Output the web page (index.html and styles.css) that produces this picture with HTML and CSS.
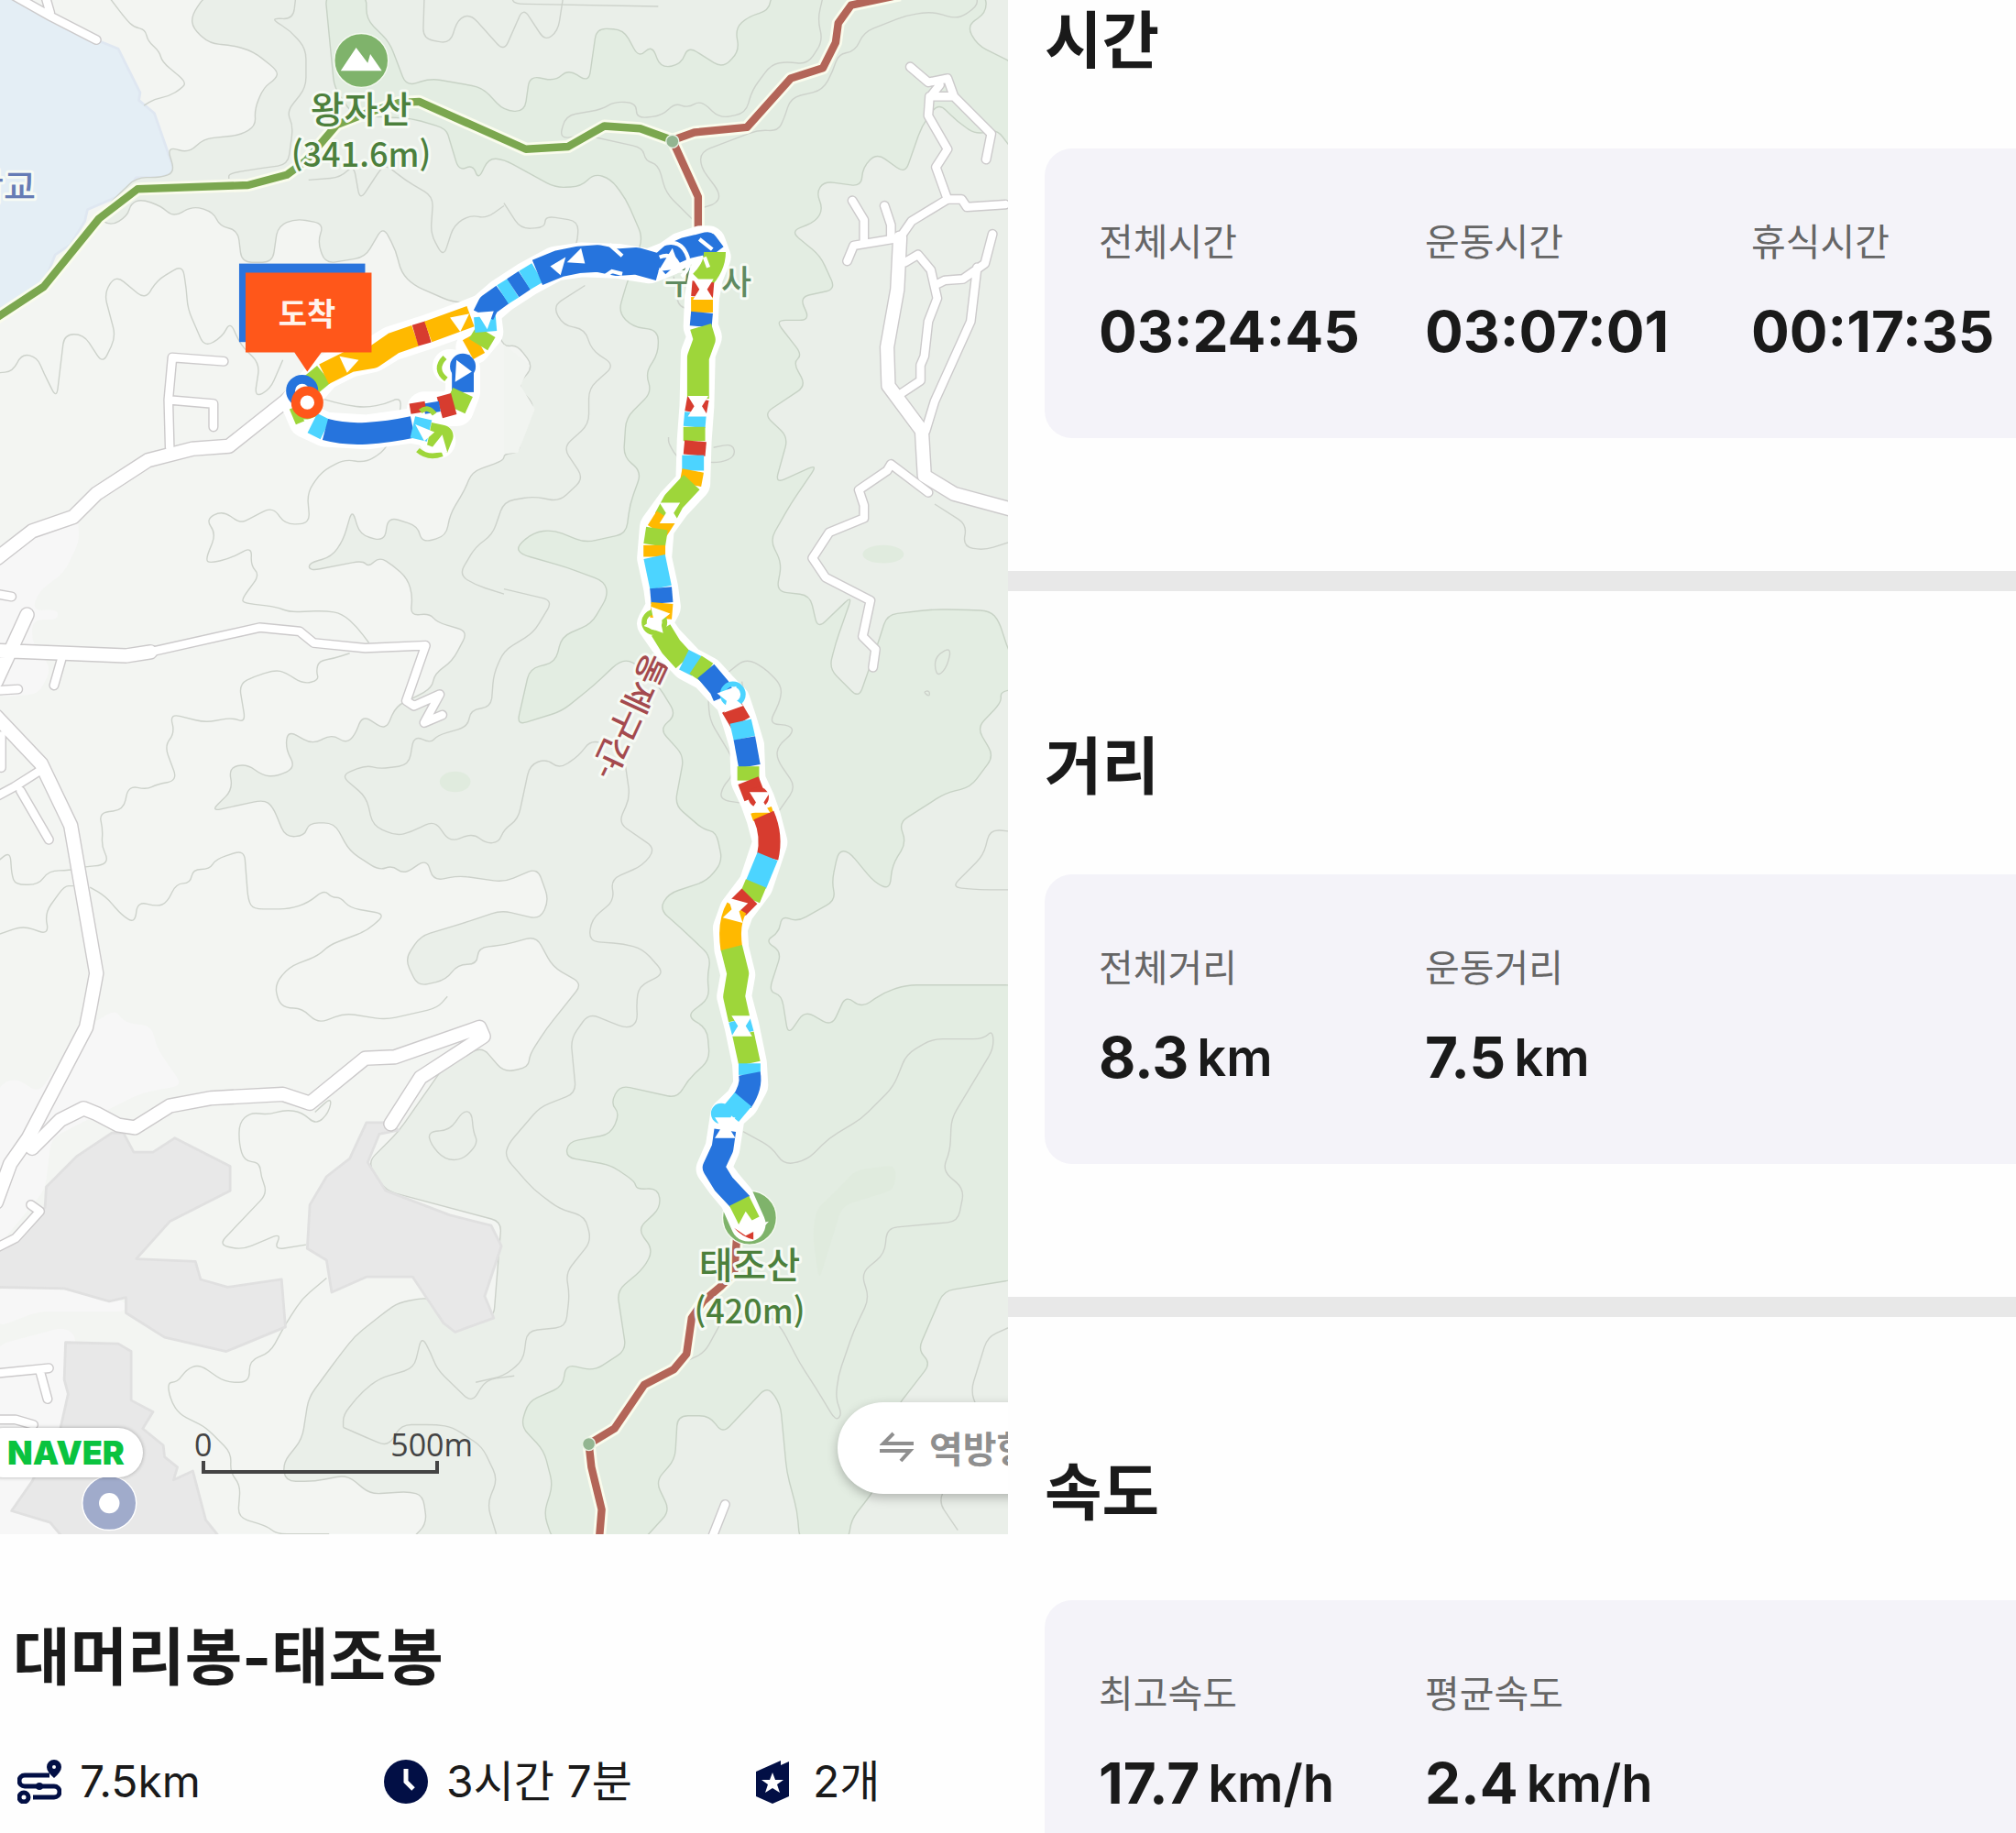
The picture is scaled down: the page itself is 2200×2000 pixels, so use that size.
FILE: index.html
```html
<!DOCTYPE html>
<html lang="ko">
<head>
    <meta charset="UTF-8">
    <meta name="viewport" content="width=device-width, initial-scale=1.0">
    <title>대머리봉-태조봉</title>
    <link rel="stylesheet" href="styles.css">
</head>
<body>
    <main class="page">
        <section class="course">
            <div class="map">
                <svg class="map-canvas" viewBox="0 0 1100 1674">
                    <defs>
                        <g id="roads-wide">
                            <path d="M-2 434L25 413L57 402L75 384L115 358L150 349L178 347L222 312L235 300" />
                            <path d="M-2 506L50 508L98 510L117 507M21 478L10 502L-3 530" />
                            <path d="M-3 557L32 594L55 642L75 757L70 784L67 799L22 885L8 905L-3 935" />
                            <path d="M25 893L47 871L65 862L75 866L92 875L105 877L132 860L164 854L220 851L241 858L284 823L307 822L373 799L376 806L327 838L304 874" />
                            <path d="M700 185L698 225L690 270L691 300L717 335L719 370L742 384L790 397" />
                        </g>
                        <g id="roads-narrow">
                            <path d="M8 -5L40 13L75 31M35 -4L39 10" />
                            <path d="M132 348L131 311L134 278L174 281M131 311L166 314L166 332" />
                            <path d="M117 507L202 488L233 491L244 500L284 504L331 502L316 545L322 549L342 540L330 562L344 556" />
                            <path d="M48 512L42 533M-2 462L9 464M-2 537L14 536M30 600L11 612L-2 619M16 615L38 653M1 572V597" />
                            <path d="M24 937L31 942L12 963L-2 970M-2 1068L38 1064M31 1066L37 1088M-2 1104L12 1104L26 1108M564 1170L553 1198" />
                            <path d="M708 52L722 64L737 61L742 75L771 104L767 124M742 75H723M731 66L723 76L722 90L737 116L728 130L737 155L709 172L700 185" />
                            <path d="M737 155H748L752 161L782 159M663 156L672 171V187M688 160L693 175V185M700 185L664 191L659 203" />
                            <path d="M704 204L714 198L724 210L729 232L722 250L719 277L716 284V296L701 306" />
                            <path d="M729 221L735 218L749 217L766 205L772 182M760 208L755 250L727 312L720 335" />
                            <path d="M722 383L693 361L690 366L668 381L672 393V403L645 414L632 434L642 449L677 467L671 495L681 505L679 519" />
                        </g>
                        <polyline id="trail-green" points="-4,248 34,223 77,170 107,147 193,144 223,136 238,125 262,97 285,88 310,80 326,79 409,116 442,114 470,98 498,100 523,109" />
                        <g id="trail-red">
                            <polyline points="700,-4 662,4 652,18 650,33 640,53 615,61 581,99 540,103 523,109 543,153 543,180" />
                            <polyline points="573,964 571,990 560,1001 547,1012 538,1025 534,1053 524,1065 501,1077 478,1111 458,1123 460,1141 468,1174 466,1198" />
                        </g>
                        <g id="route-line">
                            <path d="M238 306L232 313L238 327L253 334L285 336L320 331L334 334L341 343" />
                            <path d="M238 306L252 290L272 280L290 276L305 267L333 258L358 249L376 242L390 230L410 217L432 205L452 202L480 203L505 207L520 201L530 194L545 189L551 189L555 200L549 215L546 231L545 254L548 262L543 275L542 316L540 343L539 376L524 392L511 410L509 434L514 457L516 472L509 485L518 498L535 516L550 524L560 535L570 545L575 560L581 580L582 607L589 622L594 636L599 655L588 688L573 708L568 722L569 738L574 758L571 775L577 798L583 827L584 844L577 857L566 867L564 880L562 893L555 909L563 920L573 932L582 952" />
                            <path d="M376 242L378 258L368 270M350 285L360 287V305L355 318L330 318" />
                        </g>
                        <path id="bowtie" d="M-8 -8L8 -8L3 0L8 8L-8 8L-3 0Z" />
                    </defs>

                    <g class="terrain" transform="scale(1.403)">
                        <rect class="lowland" width="784" height="1193" />
                        <path class="urban" d="M-2 430L60 400L62 420L50 445L30 460L25 475L45 474V482H25L25 500L40 520L30 540L-2 542ZM-2 845L12 838L30 850L65 800L90 785L96 795L118 798L122 815L142 844L110 850L80 865L60 875L40 885L35 925L-2 970ZM-2 1001L50 1003L98 1012V1020L30 1020L-2 1032ZM-2 1046L50 1032L60 1040L50 1073L53 1084L47 1111L25 1152L9 1175L39 1184L60 1198H-2Z" />
                        <path class="water" d="M-4 -4L15 -2L40 14L75 31L92 38L109 72L108 78L120 88L136 134L125 138L106 138L98 150L68 163L66 172L55 190L43 198L35 218L20 230L-4 242Z" />

                        <path class="midland" d="M790 -4V1200H320L320 1197L332 1185L329 1163L318 1160L288 1162L270 1147L245 1152L222 1152L220 1138L235 1119L240 1087L262 1057L276 1039L300 1020L310 1013L332 1009L384 1025L390 950L300 926L286 904L310 880L345 830L375 814L392 834L411 830L412 820L425 800L453 765L430 752L417 728L392 735L372 737L371 750L356 750L347 762L325 767L315 746L327 728L360 718L390 708L420 715L427 700L418 675L392 686L357 681L337 685L332 668L314 680L305 673L295 677L272 662L260 640L240 640L237 650L222 651L212 627L205 622L164 631L181 614L178 597L192 594L204 603L215 604L230 597L222 582L224 568L243 579L258 571L269 578L276 572L282 556L300 568L308 549L323 542L336 535L338 524L352 514L364 491L340 484L334 477L319 479L321 464L317 450L306 440L295 433L287 441L282 436L241 444L240 438L258 433L267 420L274 396L280 416L299 421L302 402L325 409L328 422L347 417L350 400L362 380L367 367L392 358V353L404 352L405 340L411 328L416 315L402 300L415 285L402 268L392 270L378 235L352 235L322 222L312 212L308 195L298 176L284 200L253 205L247 188L252 174L230 170L216 176L212 204L188 204L185 179L171 176L166 165L150 160L135 169L125 160L110 155L102 158L99 168L86 176L75 168L106 138L125 138L136 134L130 114L147 119L158 108L187 105L199 98L198 85L205 68L215 61L216 55L197 40L180 35L163 34L150 22L149 12L160 -4Z" />
                        <path class="highland" d="M253 -4L260 68L275 90L320 92L347 100L350 110L357 133L368 128L372 140L380 123L392 124L432 146L452 145L462 135L475 139L487 155L500 185L487 222L481 243L492 254L512 257L512 275L502 290L507 305L487 325L485 355L499 367L490 392L487 415L455 422L430 412L415 414L402 425L405 431L440 441L470 452L473 463L460 485L437 495L432 515L412 520L402 564L437 553L462 533L482 514L492 514L512 533L526 556L513 567L532 588L525 626L547 645L557 647L562 670L550 685L520 695L513 707L532 724L553 744L550 760L552 776L534 790L550 800L552 824L535 840L527 854L482 844L475 858L482 866L475 882L442 888L440 900L475 906L494 919L495 925L512 924L514 939L496 956L508 972L501 986L480 1004L487 1050L462 1066L440 1061L438 1078L411 1090L405 1109L423 1128L430 1155L423 1177L430 1198H500L521 1175L510 1152L525 1135L527 1101L552 1101L562 1115L597 1078L607 1092L612 1145L620 1175L622 1198H660L662 1182L677 1163L698 1130L697 1095L724 1060L714 1050L734 1004L790 995V766L705 766L687 772L670 784L658 774L647 798L626 786L613 805L608 774L598 771L608 740L595 732L606 725L608 712L620 717L650 700L647 686L652 662L660 662L680 686L692 692L694 673L705 655L699 640L735 617L755 612L773 588L760 566L779 546L778 538L790 536V515L784 505L777 483L770 475L745 474L725 474L690 478L682 503L668 543L645 520L650 500L663 463L636 489L630 463L604 460L608 438L599 420L615 392L636 361L603 376L613 340L594 322L627 300L617 282L624 276L603 249L630 249L622 231L650 225L638 199L615 180L635 172L640 162L635 150L641 141L670 145L671 130L682 119L704 135L717 98L730 80L745 95L760 105L775 100L790 120V50L760 35L752 20L767 10V-4H600L598 8L582 13L572 22L575 40L562 53L535 36L530 50L514 53L507 35L497 45L485 23L464 22L458 64L442 54L432 63L412 59L408 87L392 86L375 68L335 61L316 67L303 33L285 15V-4Z" />
                        <ellipse class="highland-patch" cx="687" cy="431" rx="16" ry="7" />
                        <ellipse class="highland-patch" cx="354" cy="608" rx="12" ry="8" />
                        <path class="highland-patch" d="M632 960L635 940L652 925L665 910L697 906L696 925L655 938L637 996Z" />
                        <path class="peak-patch" d="M392 268L412 284L405 300L416 318L403 352L392 353Z" />

                        <g class="contours">
                            <path d="M85 -2L98 15L104 21L113 23L115 32L124 40L126 48L145 64L141 69L131 75L120 77L112 82" />
                            <path d="M230 -2L228 15L210 14L226 24L238 38L238 68L223 87L228 98L224 128L195 132L178 135V139" />
                            <path d="M330 -2L329 30L350 34L356 15L366 11L392 40L407 6L424 32L434 24L438 -2" />
                            <path d="M-2 290L10 289L17 275L29 278L34 290L44 310L50 260L65 260L80 283L90 262L81 228L90 214L113 233L122 218L142 206L145 225L146 240L159 270L173 262L179 250L187 268L202 283L198 309L210 303L220 280" />
                            <path d="M240 140L265 138L275 128L280 156L295 133L300 128L315 140L337 153L335 182L345 200L353 175L366 167L378 170L392 160" />
                            <path d="M250 310L268 315L285 317L300 314L311 309L312 318L300 350L284 360L268 357L250 367L239 383L241 407L222 408L212 394L195 403L187 407L173 397L160 404L168 415L160 435L163 438L180 434L196 425L195 440L202 447L188 466L190 469L215 472L225 476L253 475L266 477L278 488L287 500" />
                            <path d="M272 508L260 512L248 514L246 522L248 529L236 532L222 523L214 521L198 526L186 532L191 562L180 558L160 562L132 555L136 570L128 580L138 607L122 610L114 614L100 611L96 630L77 632L80 645L79 658L84 668L80 673L66 674L54 677L38 677L30 688L12 688L9 680L8 662L-2 670" />
                            <path d="M-2 727L18 720L38 727L35 710L50 689L57 689M70 690L82 697L95 712L105 718L107 701L122 705L130 702L137 687L148 687L150 676L163 676L168 668L190 661L193 700L197 707L225 707L240 702L252 692L258 698L265 698L272 706L300 711L285 724L256 735L248 743L225 752L214 765L216 778L222 784L235 784L247 796L268 788L300 793L340 784L348 775" />
                            <path d="M760 -2V5L745 15L725 9L705 12L672 25L665 40L652 42L648 55L640 70L615 76L610 92L605 102L590 101L545 118V130L560 150L558 158L545 162" />
                            <path d="M398 -2L400 3L512 5M640 -2L636 15L640 32L628 50L612 48L600 50L585 70L580 88L560 92L545 78L535 84L525 80L515 90L495 92V80L478 79L468 85L440 90L435 108L455 105L500 115L502 125L512 128L518 150L540 172" />
                            <path d="M392 158L405 178L424 177L424 168L450 172L449 190L442 200M455 222L430 238L438 253L455 256L460 272L478 284L458 302V330L438 348L454 372L435 390L415 386L392 390L383 416L370 425L357 447L370 455L392 462" />
                            <path d="M520 340V345L528 358L560 360L572 355L570 345L555 348M524 215L528 240L550 240" />
                            <path d="M728 510L740 503L737 518L730 526L727 520ZM718 538L723 537V542Z" />
                            <path d="M727 392L752 408L749 425L765 428L790 420" />
                            <path d="M552 520L560 528L580 512L594 519L608 533L607 545L598 563L615 564L617 570L605 580L604 590L619 612L605 632M577 530L580 545L550 530L552 560L570 590V603L562 612L560 622L580 625" />
                            <path d="M392 458L430 467L415 492L392 506L384 524L382 550L366 552L364 565L340 572L335 578L322 572L318 595L295 598L285 595L265 603L285 620L290 642L308 650L320 647L338 638L350 655L368 648L378 656L388 655L392 645L403 637L412 595L425 590L435 598L450 588L460 575L485 585L490 620L481 640L510 660L500 673L475 684L478 700L460 715L458 732L485 734L500 738L517 757L497 767L495 780L496 795L488 800L475 795L458 788L444 808L448 850L420 861L395 890L393 900L415 925L435 940L455 946L460 965L440 990L443 1006L440 1032L410 1035L407 1058L392 1070L370 1075" />
                            <path d="M578 880L600 892L610 906L628 902L645 885L670 870L695 845L705 820L725 808L765 808L772 801L773 815L740 870L739 895L733 910L750 925L745 950L690 955L688 975L670 990L676 1010L664 1035L652 1070L650 1088L655 1100L650 1105L635 1080L622 1060L608 1033L600 1025M560 1030L548 1052L535 1058" />
                            <path d="M790 692H762L740 690L765 665L770 645L790 647M790 1030L768 1040L755 1082L762 1100L730 1168L745 1190" />
                            <path d="M245 865L258 853L256 865L246 875L235 865L222 863L208 867L195 865L186 873V890L190 903L202 904L203 915L208 928L170 968L188 972L205 965L219 959L213 972L238 968M254 994L235 1010L222 1030L210 1052L194 1058V1075H175L155 1061L145 1065L138 1075H130L133 1090L140 1100L150 1105L160 1110L180 1130L179 1145L187 1155L185 1180L208 1187L215 1193L256 1193" />
                            <path d="M350 879L360 864L367 865L368 880L372 889L360 902H346L335 890L333 880ZM267 1110V1100L282 1082L295 1072L322 1064L328 1039L335 1052L340 1065L367 1091L378 1073L400 1070M267 1110L285 1118L302 1125L312 1108H340L352 1110L375 1125L387 1150L379 1170L386 1193" />
                        </g>

                        <path class="built" d="M87 881H96L104 896L119 896L136 885L179 907V926L132 950L106 979L152 981L156 995L177 1001L219 995L222 1032L176 1051L128 1040L98 1021V1009L85 1012L50 1002L-4 1001V975L15 961L35 939L36 923L60 899Z" />
                        <path class="built" d="M51 1044L92 1045L102 1051V1089L119 1098L111 1111L127 1124L128 1133L138 1141L135 1151L150 1144L160 1182L172 1197H50L39 1184L9 1175L25 1152L47 1111L53 1084L50 1073Z" />
                        <path class="built" d="M285 873H300L310 879L295 882L286 904L300 926L350 945L382 953L390 969L377 1008L384 1025L354 1036L345 1029L321 993L285 993L258 1005L254 980L239 971L241 937L254 915L272 901Z" />

                        <use href="#roads-narrow" class="road-edge narrow-edge" />
                        <use href="#roads-wide" class="road-edge wide-edge" />
                        <use href="#roads-narrow" class="road narrow" />
                        <use href="#roads-wide" class="road wide" />

                        <use href="#trail-green" class="trail-edge" />
                        <use href="#trail-red" class="trail-edge" />
                        <use href="#trail-green" class="trail green" />
                        <use href="#trail-red" class="trail red" />
                        <circle class="junction" cx="523" cy="110" r="5" />
                        <circle class="junction" cx="458" cy="1123" r="5" />
                        <circle class="peak" cx="281" cy="47" r="21" />
                        <path class="peak-icon" d="M265 55L277 37L286 49L288 42L297 55Z" />
                        <circle class="peak" cx="583" cy="947" r="21" />
                        <circle class="place" cx="85" cy="1169" r="21" />
                        <circle class="hole" cx="85" cy="1169" r="8" />
                    </g>

                    <g class="map-text">
                        <text class="school" x="39" y="217" text-anchor="end">학교</text>
                        <text class="temple" x="725" y="321">구</text>
                        <text class="temple" x="787" y="321">사</text>
                        <text class="closed" text-anchor="middle" transform="translate(675 776) rotate(115)">통제구간-</text>
                    </g>

                    <g transform="scale(1.403)">
                        <use href="#route-line" class="route-edge" />
                        <g class="route">
                            <path class="lime" d="M233 315L238 327" />
                            <path class="sky" d="M243 329L253 334" />
                            <path class="blue" d="M253 334Q268 338 285 337T321 332" />
                            <path class="sky" d="M321 332L334 335" />
                            <path class="lime" d="M334 337L344 339L340 349" />
                            <path class="lime" d="M241 300L252 291" />
                            <path class="amber" d="M252 291L272 281L290 278L306 267L323 261" />
                            <path class="red" d="M323 261L333 258" />
                            <path class="amber" d="M333 258L366 246" />
                            <path class="amber" d="M364 272L373 267" />
                            <path class="lime" d="M372 268L378 258" />
                            <path class="sky" d="M378 258L377 246" />
                            <path class="blue" d="M376 245L380 237L391 229" />
                            <path class="sky" d="M391 229L399 224" />
                            <path class="blue" d="M399 224L408 218" />
                            <path class="sky" d="M408 218L418 212" />
                            <path class="blue track-wide" d="M418 212L435 205L450 202L465 201L480 204L495 203L513 208" />
                            <path class="blue" d="M512 207L522 198L533 193L542 191L550 189L556 197" />
                            <path class="lime" d="M556 196Q556 208 545 219" />
                            <path class="red" d="M547 219L546 231" />
                            <path class="amber" d="M546 231V243" />
                            <path class="blue" d="M546 243L545 254" />
                            <path class="lime" d="M545 254L548 264L543 278V310" />
                            <path class="red" d="M543 310L541 321" />
                            <path class="sky" d="M541 321L540 332" />
                            <path class="lime" d="M540 332L540 343" />
                            <path class="red" d="M541 343L540 354" />
                            <path class="sky" d="M539 354V366" />
                            <path class="amber" d="M539 366L537 377" />
                            <path class="lime" d="M538 375L524 390L517 403" />
                            <path class="amber" d="M518 402L511 413" />
                            <path class="lime" d="M511 411L509 424" />
                            <path class="amber" d="M509 424V433" />
                            <path class="sky" d="M509 433L514 457" />
                            <path class="blue" d="M514 457L515 469" />
                            <path class="amber" d="M515 469L514 481" />
                            <path class="lime" d="M514 490L522 503L532 514" />
                            <path class="sky" d="M532 513L542 518" />
                            <path class="lime" d="M541 517L550 523" />
                            <path class="blue" d="M549 522L560 535L563 542" />
                            <path class="red" d="M569 550L576 562" />
                            <path class="sky" d="M576 561L579 574" />
                            <path class="blue" d="M579 574L583 596" />
                            <path class="lime" d="M582 596V607" />
                            <path class="red" d="M582 607L587 620" />
                            <path class="amber" d="M592 630L594 636" />
                            <path class="red" d="M594 634Q601 650 597 667" />
                            <path class="sky" d="M597 666L588 688" />
                            <path class="lime" d="M588 687L583 699" />
                            <path class="red" d="M583 697L574 706" />
                            <path class="amber" d="M573 706Q566 718 569 738" />
                            <path class="lime" d="M569 737L574 757L571 775L575 793" />
                            <path class="sky" d="M575 793L578 804" />
                            <path class="lime" d="M578 804L583 827" />
                            <path class="sky" d="M583 827V836" />
                            <path class="blue" d="M583 835Q585 845 577 857" />
                            <path class="sky" d="M578 855L568 867" />
                            <path class="blue" d="M564 879L562 893L555 908L563 921L577 936" />
                            <path class="lime" d="M575 934L583 950" />
                            <path class="blue" d="M360 284V305" />
                            <path class="lime" d="M360 305L354 318" />
                            <path class="red" d="M353 314L342 317" />
                            <path class="blue thin" d="M342 316L330 318" />
                            <path class="red thin" d="M331 316L319 318" />
                        </g>
                        <circle class="fill-blue" cx="360" cy="285" r="10" />
                        <circle class="fill-sky" cx="561" cy="866" r="8" />
                        <circle class="ring sky" cx="570" cy="540" r="8" />
                        <circle class="ring lime" cx="509" cy="484" r="8" />
                        <circle class="fill-red" cx="590" cy="620" r="8" />
                        <path class="ring lime" d="M347 295Q337 287 346 278M327 320Q333 315 338 322M325 350Q333 357 344 353" />
                        <path class="seam" d="M515 190Q530 185 535 200Q537 210 530 215M513 200Q523 196 528 206M544 186L554 194M548 200L551 208M474 190L484 199M470 215L476 211L484 213" />
                        <path class="arrow" d="M264 277L279 280L270 290ZM350 247L365 244L358 258ZM371 243L384 242L379 256ZM355 280L367 289L354 297ZM428 207L440 200L436 214ZM441 204L452 193L455 205ZM512 211L523 193L529 209ZM323 330L338 336L330 343ZM333 352L344 338L348 352ZM236 326L243 326L240 333Z" />
                        <path class="arrow" d="M572 957L580 942L587 952L598 950L587 962Z" />
                        <path class="fill-red" d="M571 955Q577 962 586 964V958L580 961Z" />
                        <g class="arrow">
                            <use href="#bowtie" transform="translate(547 225)" />
                            <use href="#bowtie" transform="translate(543 316)" />
                            <use href="#bowtie" transform="translate(521 399)" />
                            <use href="#bowtie" transform="translate(511 482) rotate(20)" />
                            <use href="#bowtie" transform="translate(568 544) rotate(-20)" />
                            <use href="#bowtie" transform="translate(591 624)" />
                            <use href="#bowtie" transform="translate(572 708) rotate(15)" />
                            <use href="#bowtie" transform="translate(577 798)" />
                            <use href="#bowtie" transform="translate(564 877)" />
                        </g>

                        <rect class="pin-start" x="186" y="205" width="98" height="61" />
                        <circle class="pin-ring start" cx="235" cy="304" r="9" />
                        <path class="pin-end" d="M191 212H289V274H250L239 289L229 274H191Z" />
                        <circle class="pin-ring end" cx="239" cy="313" r="9" />
                    </g>

                    <g class="map-text">
                        <text class="pin-label" x="335" y="355" text-anchor="middle">도착</text>
                        <text class="mountain" x="394" y="134" text-anchor="middle">왕자산</text>
                        <text class="height" x="394" y="182" text-anchor="middle">(341.6m)</text>
                        <text class="mountain" x="818" y="1395" text-anchor="middle">태조산</text>
                        <text class="height" x="818" y="1444" text-anchor="middle">(420m)</text>
                    </g>
                </svg>

                <a class="naver" href="#naver">NAVER</a>
                <div class="scale">
                    <div class="scale-labels"><span>0</span><span>500m</span></div>
                    <div class="scale-bar"></div>
                </div>
                <button class="reverse-btn" type="button">
                    <svg width="38" height="34" viewBox="0 0 38 34">
                        <path d="M37 13H4L15 2M0 21H33L23 32" />
                    </svg>
                    <span>역방향</span>
                </button>
            </div>

            <div class="summary">
                <h1>대머리봉-태조봉</h1>
                <ul class="facts">
                    <li>
                        <svg class="icon" viewBox="0 0 48 48">
                            <path class="icon-line" d="M35 17H8A5 5 0 0 0 8 29H40A6 6 0 0 1 40 41H17" />
                            <circle cx="24" cy="29" r="4" />
                            <path fill-rule="evenodd" d="M40 0A8 8 0 0 1 48 8Q48 13 40 20Q32 13 32 8A8 8 0 0 1 40 0ZM40 6A2 2 0 0 0 40 10A2 2 0 0 0 40 6Z" />
                            <circle class="icon-line" cx="7" cy="41" r="5" />
                        </svg>
                        <span>7.5km</span>
                    </li>
                    <li>
                        <svg class="icon" viewBox="0 0 48 48">
                            <circle cx="24" cy="24" r="24" />
                            <path class="icon-hand" d="M24 10V24L32 32" />
                        </svg>
                        <span>3시간 7분</span>
                    </li>
                    <li>
                        <svg class="icon" viewBox="0 0 48 48">
                            <path d="M6 13L33 1V6L42 2V40L24 48L6 40Z" />
                            <path class="icon-star" d="M24 14L27 22H36L29 27L32 36L24 31L16 36L19 27L12 22H21Z" />
                        </svg>
                        <span>2개</span>
                    </li>
                </ul>
            </div>
        </section>

        <section class="records">
            <section class="record">
                <h2>시간</h2>
                <dl class="card">
                    <div><dt>전체시간</dt><dd>03:24:45</dd></div>
                    <div><dt>운동시간</dt><dd>03:07:01</dd></div>
                    <div><dt>휴식시간</dt><dd>00:17:35</dd></div>
                </dl>
            </section>
            <section class="record">
                <h2>거리</h2>
                <dl class="card">
                    <div><dt>전체거리</dt><dd>8.3<span class="unit">km</span></dd></div>
                    <div><dt>운동거리</dt><dd>7.5<span class="unit">km</span></dd></div>
                </dl>
            </section>
            <section class="record">
                <h2>속도</h2>
                <dl class="card">
                    <div><dt>최고속도</dt><dd>17.7<span class="unit">km/h</span></dd></div>
                    <div><dt>평균속도</dt><dd>2.4<span class="unit">km/h</span></dd></div>
                </dl>
            </section>
        </section>
    </main>

    <script src="map.js"></script>
</body>
</html>
```
FILE: styles.css
```css
* {
    box-sizing: border-box;
}
body {
    margin: 0;
    font-family: Inter, "Noto Sans CJK KR", sans-serif;
    background-color: #fefefe;
    color: #1a1a1a;
}
.page {
    display: grid;
    grid-template-columns: 1fr 1fr;
    height: 100vh;
    overflow: hidden;
}
.course, .records {
    min-width: 0;
}

/* map */
.map {
    position: relative;
    overflow: hidden;
}
.map-canvas {
    display: block;
    width: 100%;
    height: auto;
}
.lowland { fill: #f3f5f2; }
.midland { fill: #eaefe9; stroke: #ccd1ca; }
.highland { fill: #e3ede2; stroke: #c7d2c5; }
.highland-patch { fill: #e0ebde; }
.peak-patch { fill: #f1f4f0; }
.urban { fill: #f7f7f7; }
.water { fill: #e4eef5; stroke: #dfe7f1; stroke-width: 2; }
.built { fill: #e8e8e8; stroke: #e0e0e0; stroke-width: 2; }
.terrain path {
    stroke-linejoin: round;
}
.contours {
    fill: none;
    stroke: #cdd2cb;
    stroke-width: 1;
}
.road-edge, .road, .trail-edge, .trail, .route-edge, .route {
    fill: none;
    stroke-linejoin: round;
}
.road-edge { stroke: #cccacb; stroke-linecap: round; }
.road { stroke: #ffffff; stroke-linecap: round; }
.narrow-edge { stroke-width: 8; }
.narrow { stroke-width: 6; }
.wide-edge { stroke-width: 12; }
.wide { stroke-width: 10; }
.trail-edge { stroke: #fafced; stroke-width: 10; }
.trail { stroke-width: 6; }
.trail.green { stroke: #7ba74f; }
.trail.red { stroke: #b36558; }
.junction { fill: #93b591; stroke: #e8f1e4; stroke-width: 1; }
.peak { fill: #7fb36b; stroke: #f5faf0; stroke-width: 1; }
.peak-icon, .hole { fill: #ffffff; }
.place { fill: #a0abcb; stroke: #ffffff; stroke-width: 1; }

/* gps route */
.route-edge { stroke: #ffffff; stroke-width: 27; stroke-linecap: round; }
.route { stroke-width: 17; }
.track-wide { stroke-width: 21; }
.blue { stroke: #2674dd; }
.sky { stroke: #4cd4ff; }
.lime { stroke: #9ed63a; }
.amber { stroke: #ffb900; }
.red { stroke: #d73c2f; }
.thin { stroke-width: 8; }
.ring { fill: none; stroke-width: 4; }
.fill-blue { fill: #2674dd; }
.fill-sky { fill: #4cd4ff; }
.fill-red { fill: #d73c2f; }
.seam { fill: none; stroke: #ffffff; stroke-width: 3; }
.arrow { fill: #ffffff; }
.pin-start { fill: #2a74dc; }
.pin-end { fill: #ff571a; }
.pin-ring { fill: #ffffff; stroke-width: 7; }
.pin-ring.start { stroke: #2674dd; }
.pin-ring.end { stroke: #ff571a; }

.map-text {
    font-family: "Noto Sans CJK KR", sans-serif;
    font-weight: 500;
    paint-order: stroke;
    stroke: #f6faf4;
    stroke-width: 6;
    stroke-linejoin: round;
}
.mountain { font-size: 40px; fill: #4c803c; }
.height { font-size: 36px; fill: #4c803c; }
.temple { font-size: 36px; fill: #5f8a60; }
.school { font-size: 38px; fill: #667cb5; }
.closed { font-size: 36px; fill: #a44a4e; }
.pin-label { font-size: 34px; font-weight: 700; fill: #fff3ec; stroke: none; }

.naver {
    position: absolute;
    left: -24px;
    bottom: 62px;
    width: 180px;
    height: 54px;
    padding-left: 32px;
    border-radius: 27px;
    background-color: #ffffff;
    box-shadow: 0 0 4px rgba(0, 0, 0, 0.3);
    color: #0ac33f;
    font-size: 36px;
    font-weight: 900;
    line-height: 54px;
    text-decoration: none;
}
.scale {
    position: absolute;
    left: 212px;
    bottom: 66px;
    width: 304px;
    font-family: "Open Sans", sans-serif;
    font-size: 34px;
    line-height: 36px;
    color: #444444;
}
.scale-labels {
    display: flex;
    justify-content: space-between;
}
.scale-bar {
    width: 259px;
    height: 14px;
    margin-left: 8px;
    border: 4px solid #444444;
    border-top: none;
}
.reverse-btn {
    position: absolute;
    left: 914px;
    bottom: 44px;
    display: flex;
    align-items: center;
    gap: 16px;
    height: 100px;
    padding: 0 48px 2px 46px;
    border: none;
    border-radius: 50px;
    background-color: #ffffff;
    box-shadow: 0 4px 12px rgba(0, 0, 0, 0.25);
    color: #8f8f8f;
    font-family: inherit;
    font-size: 40px;
    font-weight: 700;
    white-space: nowrap;
    cursor: pointer;
}
.reverse-btn svg {
    flex: none;
    fill: none;
    stroke: #8f8f8f;
    stroke-width: 4;
}

/* course summary */
.summary {
    padding: 84px 14px;
}
.summary h1 {
    margin: 0;
    font-size: 68px;
    font-weight: 700;
    line-height: 100px;
}
.facts {
    display: grid;
    grid-template-columns: repeat(3, 400px);
    margin: 54px 0 0;
    padding: 0 5px;
    list-style: none;
}
.facts li {
    display: flex;
    align-items: center;
    gap: 20px;
    font-size: 48px;
    line-height: 64px;
    white-space: nowrap;
}
.icon {
    width: 48px;
    height: 48px;
    fill: #020f45;
}
.icon-line {
    fill: none;
    stroke: #020f45;
    stroke-width: 5;
}
.icon-hand {
    fill: none;
    stroke: #ffffff;
    stroke-width: 5;
}
.icon-star {
    fill: #ffffff;
}

/* records */
.record {
    padding: 149px 0 145px 40px;
    border-bottom: 22px solid #e8e8e8;
}
.record:first-child {
    padding-top: 2px;
}
.record h2 {
    margin: 0 0 76px;
    font-size: 68px;
    font-weight: 700;
    line-height: 84px;
}
.card {
    display: grid;
    grid-template-columns: repeat(3, 356px);
    height: 316px;
    margin: 0;
    padding: 74px 0 0 59px;
    border-radius: 30px 0 0 30px;
    background-color: #f4f3f9;
}
.card dt {
    margin-bottom: 30px;
    color: #666666;
    font-size: 41px;
    line-height: 56px;
}
.card dd {
    display: flex;
    align-items: center;
    gap: 9px;
    margin: 0;
    font-size: 62px;
    font-weight: 700;
    line-height: 80px;
    white-space: nowrap;
}
.unit {
    font-size: 56px;
    font-weight: 600;
}
```
FILE: map.js
```js
// rounds the corners of the contour lines so they read as hills
const ROUND = 8;

function readPath(d) {
    const tokens = d.match(/[MLHVZ]|-?\d+/g);
    const lines = [];
    let line = null;
    let cmd = 'M';
    let x = 0;
    let y = 0;
    for (let i = 0; i < tokens.length; i++) {
        if (/[MLHVZ]/.test(tokens[i])) {
            cmd = tokens[i];
            if (cmd === 'M') {
                line = { points: [], closed: false };
                lines.push(line);
            }
            if (cmd === 'Z') line.closed = true;
            continue;
        }
        if (cmd === 'H') {
            x = Number(tokens[i]);
        } else if (cmd === 'V') {
            y = Number(tokens[i]);
        } else {
            x = Number(tokens[i]);
            y = Number(tokens[++i]);
        }
        line.points.push([x, y]);
    }
    return lines;
}

// point on the way from a to b, at most ROUND away from a
function toward(a, b) {
    const length = Math.hypot(b[0] - a[0], b[1] - a[1]) || 1;
    const t = Math.min(ROUND, length / 2) / length;
    return [a[0] + (b[0] - a[0]) * t, a[1] + (b[1] - a[1]) * t];
}

function smooth({ points, closed }) {
    const n = points.length;
    let d = '';
    for (let i = 0; i < n; i++) {
        const p = points[i];
        if (!closed && (i === 0 || i === n - 1)) {
            d += (i === 0 ? 'M' : 'L') + p;
            continue;
        }
        const before = toward(p, points[(i + n - 1) % n]);
        const after = toward(p, points[(i + 1) % n]);
        d += (i === 0 ? 'M' : 'L') + before + 'Q' + p + ' ' + after;
    }
    return d + (closed ? 'Z' : '');
}

document.querySelectorAll('.midland, .highland, .highland-patch, .urban, .contours path').forEach((path) => {
    if (path.tagName !== 'path') return;
    path.setAttribute('d', readPath(path.getAttribute('d')).map(smooth).join(''));
});
```
